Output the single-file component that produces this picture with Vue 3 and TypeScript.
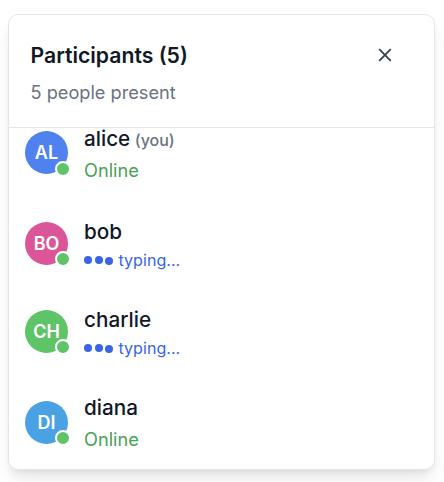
<script setup lang="ts">
import { nextTick, onMounted, ref } from 'vue'

interface Participant {
  name: string
  color: string
  typing?: boolean
  you?: boolean
}

const participants: Participant[] = [
  { name: 'alice', color: '#4f82ee', you: true },
  { name: 'bob', color: '#db5698', typing: true },
  { name: 'charlie', color: '#5fc468', typing: true },
  { name: 'diana', color: '#4aa2e4' },
]

const list = ref<HTMLElement | null>(null)

onMounted(async () => {
  await nextTick()
  if (list.value) list.value.scrollTop = 21
})
</script>

<template>
  <main class="page">
    <section class="panel">
      <header class="head">
        <div>
          <h2 class="title">Participants (5)</h2>
          <p class="subtitle">5 people present</p>
        </div>
        <button class="close" aria-label="Close">
          <svg width="18" height="18" viewBox="0 0 18 18" fill="none">
            <path d="M3.2 3.2l11.6 11.6M14.8 3.2L3.2 14.8" stroke="#374151" stroke-width="1.8" />
          </svg>
        </button>
      </header>
      <div ref="list" class="list">
        <div v-for="p in participants" :key="p.name" class="row">
          <div class="avatar" :style="{ background: p.color }">
            {{ p.name.slice(0, 2).toUpperCase() }}
            <span class="dot"></span>
          </div>
          <div class="info">
            <div class="name">{{ p.name }} <span v-if="p.you" class="you">(you)</span></div>
            <div v-if="p.typing" class="typing">
              <span class="pulse"><i></i><i></i><i></i></span>
              typing...
            </div>
            <div v-else class="online">Online</div>
          </div>
        </div>
      </div>
    </section>
  </main>
</template>

<style>
body {
  background: #fff;
}
</style>

<style scoped>
.page {
  box-sizing: border-box;
  min-height: 482px;
  padding: 14px 0 0 8px;
  overflow: hidden;
}
.panel {
  box-sizing: border-box;
  display: flex;
  flex-direction: column;
  width: 427px;
  height: 456px;
  border: 1px solid #e5e5e8;
  border-radius: 10px;
  background: #fff;
  box-shadow: 0 11px 17px -3px rgba(0, 0, 0, 0.1), 0 4px 7px -4px rgba(0, 0, 0, 0.1);
  font-family: Inter, sans-serif;
  overflow: hidden;
}
.head {
  box-sizing: border-box;
  display: flex;
  flex: none;
  justify-content: space-between;
  align-items: flex-start;
  height: 113px;
  padding: 27px 40px 0 21.5px;
  border-bottom: 1px solid #e5e5e8;
}
.title {
  margin: 0;
  font-size: 21.2px;
  font-weight: 600;
  line-height: 26px;
  color: #111827;
}
.subtitle {
  margin: 12px 0 0;
  font-size: 18.2px;
  line-height: 25px;
  color: #6b7280;
}
.close {
  display: flex;
  margin: 4px 0 0;
  padding: 0;
  border: 0;
  background: none;
}
.list {
  flex: 1;
  min-height: 0;
  padding-bottom: 8px;
  overflow: hidden;
}
.row {
  display: flex;
  align-items: flex-start;
  gap: 16px;
  padding: 18px 16px 17px;
}
.avatar {
  position: relative;
  display: flex;
  flex: none;
  align-items: center;
  justify-content: center;
  width: 43px;
  height: 43px;
  margin-top: 3.6px;
  border-radius: 50%;
  color: #fff;
  font-size: 18px;
  font-weight: 600;
}
.row:first-child .avatar {
  margin-top: 6px;
}
.row:last-child .avatar {
  margin-top: 6.4px;
}
.dot {
  position: absolute;
  right: -3px;
  bottom: -2.5px;
  width: 12px;
  height: 12px;
  border: 2px solid #fff;
  border-radius: 50%;
  background: #5fc468;
}
.name {
  font-size: 20.7px;
  font-weight: 500;
  line-height: 27px;
  color: #111827;
}
.you {
  margin-left: -1px;
  font-size: 16px;
  color: #6b7280;
}
.online {
  margin-top: 4.4px;
  font-size: 18.2px;
  line-height: 25px;
  color: #4ba056;
}
.row:last-child .online {
  margin-top: 5.4px;
}
.typing {
  display: flex;
  align-items: center;
  gap: 5.5px;
  margin-top: 5px;
  font-size: 16.1px;
  line-height: 21px;
  color: #3865e3;
}
.pulse {
  display: flex;
  gap: 2.5px;
}
.pulse i {
  width: 8px;
  height: 8px;
  border-radius: 50%;
  background: #3865e3;
  transform: translateY(-1px);
}
.pulse i:last-child {
  transform: none;
}
</style>
